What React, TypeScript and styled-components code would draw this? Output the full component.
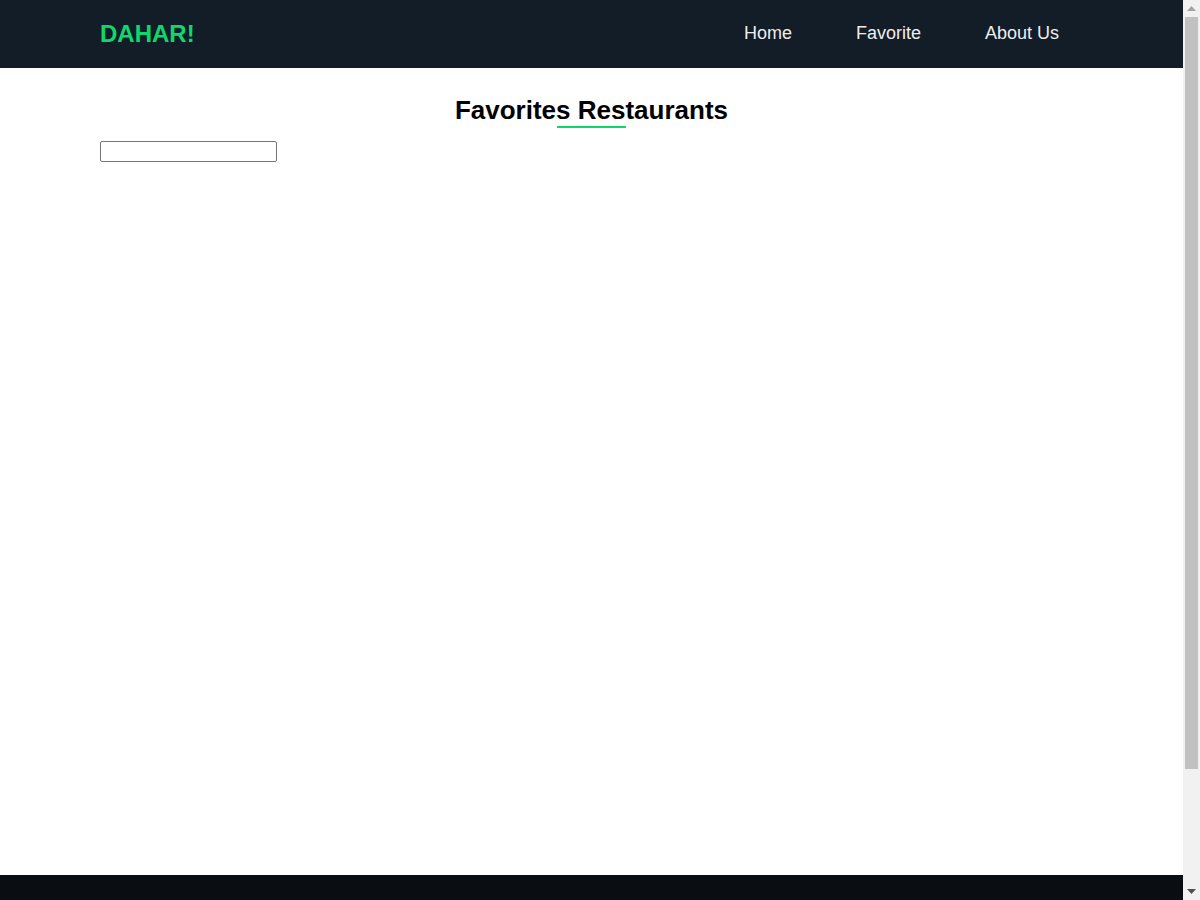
import React from "react";
import styled, { createGlobalStyle } from "styled-components";

const GlobalStyle = createGlobalStyle`
  html, body {
    margin: 0;
    padding: 0;
    background: #ffffff;
    font-family: "Liberation Sans", Arial, sans-serif;
  }
  * { box-sizing: border-box; }
`;

const Page = styled.div`
  width: calc(100% - 17px);
`;

const Header = styled.header`
  height: 68px;
  background: #121d28;
  display: flex;
  align-items: center;
  justify-content: space-between;
  padding: 0 124px 0 100px;
`;

const Logo = styled.a`
  font-size: 24px;
  font-weight: 700;
  color: #0ed86c;
  text-decoration: none;
  line-height: 1;
`;

const Nav = styled.nav`
  display: flex;
  gap: 64px;
  padding-bottom: 2px;
`;

const NavLink = styled.a`
  font-size: 18px;
  color: #eeeeee;
  text-decoration: none;
  line-height: 1;
`;

const Main = styled.main`
  min-height: 807px;
  padding: 27px 100px 0;
  display: flex;
  flex-direction: column;
`;

const TitleWrap = styled.div`
  display: flex;
  flex-direction: column;
  align-items: center;
`;

const Title = styled.h2`
  margin: 0;
  font-size: 26px;
  font-weight: 700;
  line-height: 30px;
  color: #000;
`;

const Underline = styled.span`
  display: block;
  width: 69px;
  height: 2px;
  margin-top: 1px;
  background: #0ed86c;
`;

const Search = styled.input`
  margin: 13px 0 0;
  align-self: flex-start;
  width: 177px;
  height: 21px;
  padding: 1px 2px;
  border: 1px solid #767676;
  border-radius: 2px;
  font-size: 13px;
`;

const Footer = styled.footer`
  height: 161px;
  background: #0a0e12;
`;

const Scrollbar = styled.div`
  position: fixed;
  top: 0;
  right: 0;
  width: 17px;
  height: 100vh;
  background: #f1f1f1;
  display: flex;
  flex-direction: column;
  align-items: center;
`;

const Arrow = styled.div`
  height: 17px;
  width: 17px;
  display: flex;
  align-items: center;
  justify-content: center;
`;

const Thumb = styled.div`
  width: 13px;
  height: 752px;
  background: #c1c1c1;
`;

const Track = styled.div`
  flex: 1;
`;

export default function App() {
  return (
    <>
      <GlobalStyle />
      <Page>
        <Header>
          <Logo href="#">DAHAR!</Logo>
          <Nav>
            <NavLink href="#">Home</NavLink>
            <NavLink href="#">Favorite</NavLink>
            <NavLink href="#">About Us</NavLink>
          </Nav>
        </Header>
        <Main>
          <TitleWrap>
            <Title>Favorites Restaurants</Title>
            <Underline />
          </TitleWrap>
          <Search type="text" aria-label="search" />
        </Main>
        <Footer />
      </Page>
      <Scrollbar aria-hidden="true">
        <Arrow>
          <svg width="9" height="5" viewBox="0 0 9 5">
            <path d="M0 5 L4.5 0 L9 5 Z" fill="#a3a3a3" />
          </svg>
        </Arrow>
        <Thumb />
        <Track />
        <Arrow>
          <svg width="9" height="5" viewBox="0 0 9 5">
            <path d="M0 0 L4.5 5 L9 0 Z" fill="#505050" />
          </svg>
        </Arrow>
      </Scrollbar>
    </>
  );
}
